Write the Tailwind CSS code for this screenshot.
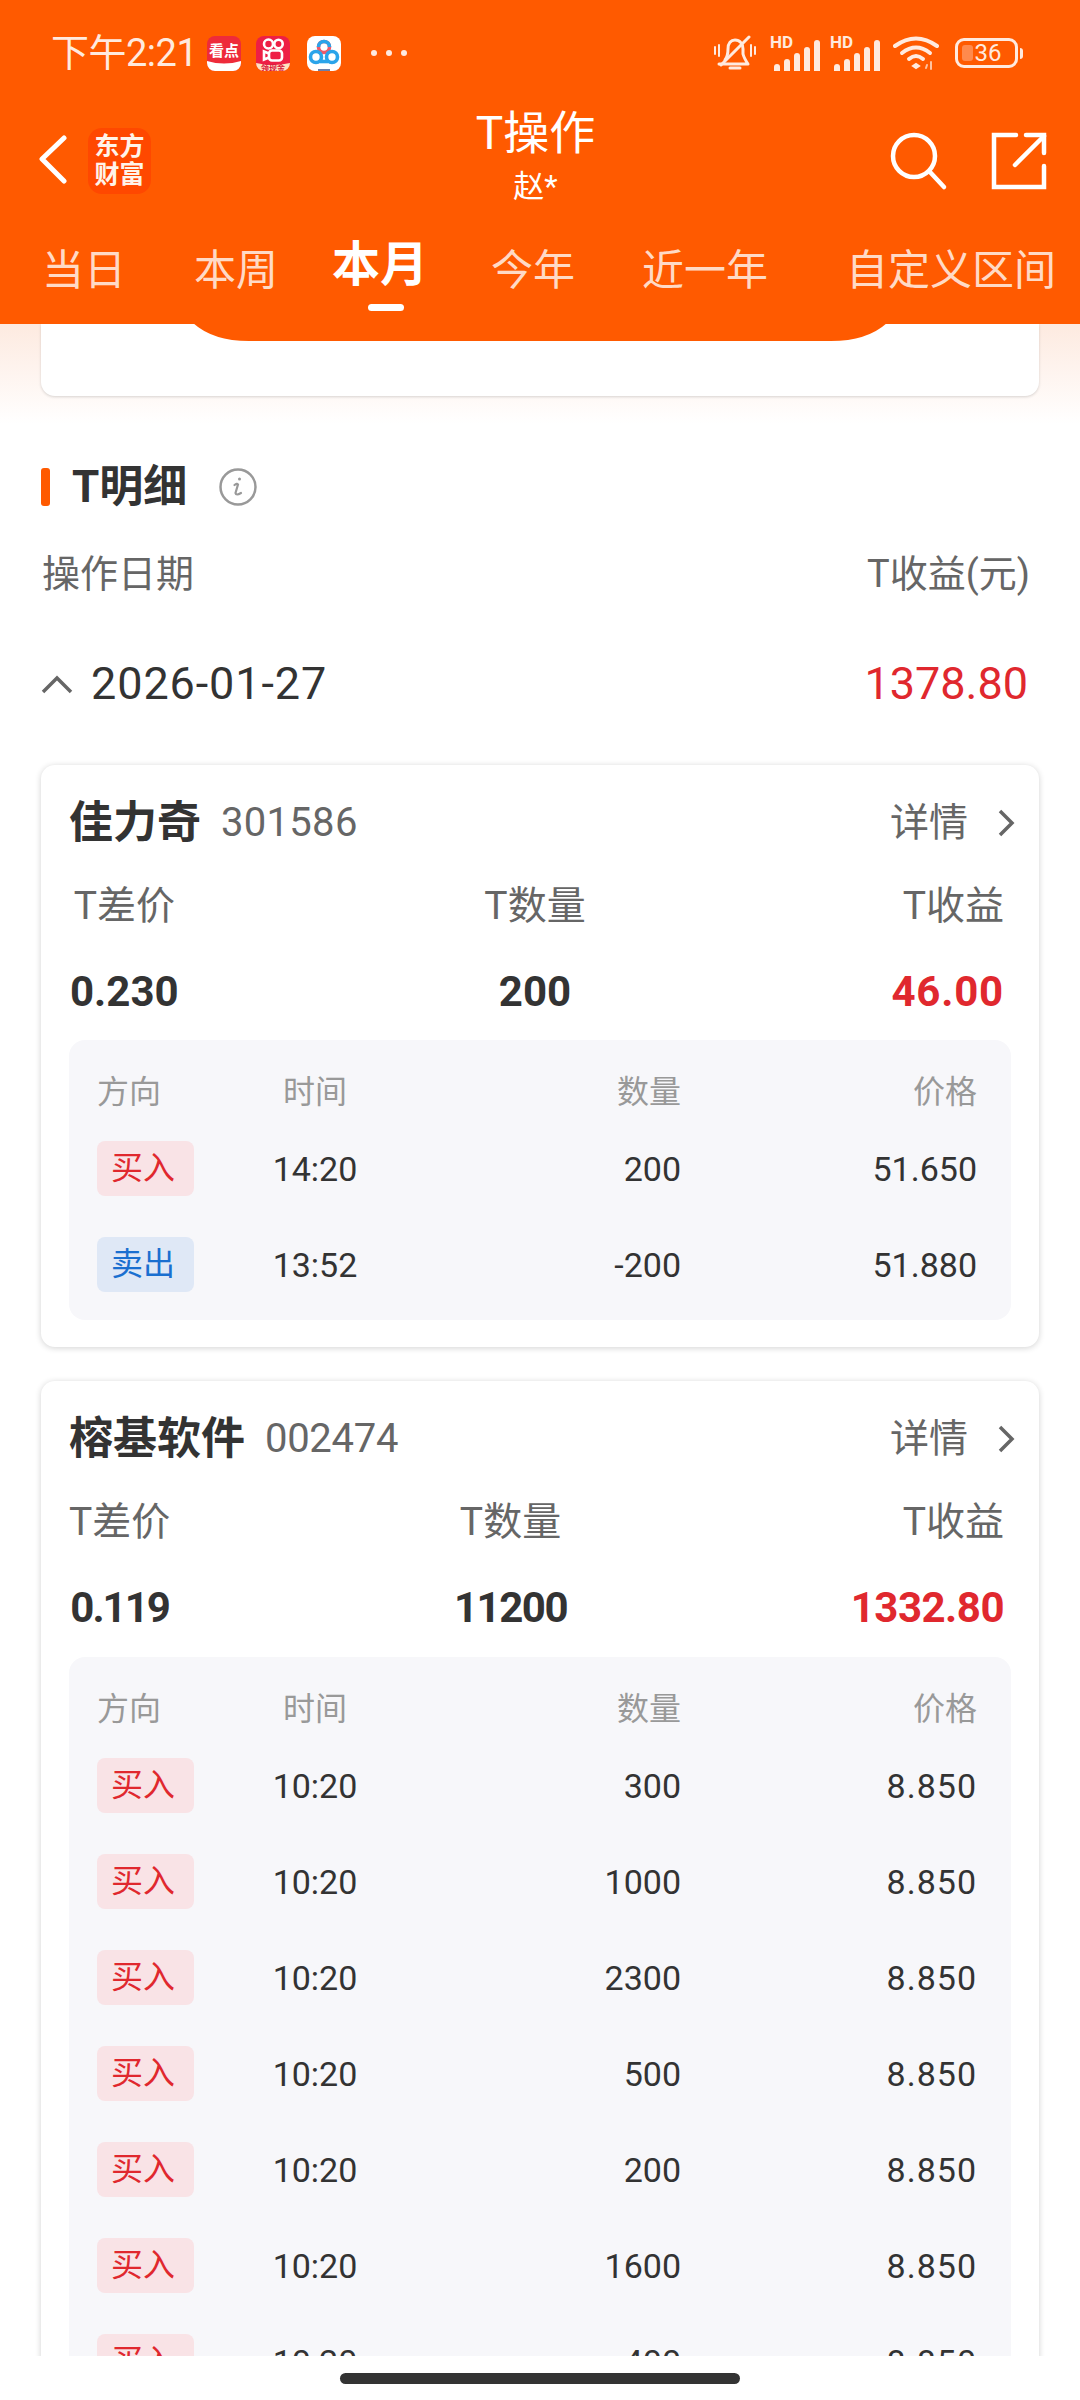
<!DOCTYPE html>
<html lang="zh-CN">
  <head>
    <meta charset="utf-8" />
    <title>T操作</title>
    <script src="https://cdn.jsdelivr.net/npm/@tailwindcss/browser@4"></script>
  </head>
  <body class="bg-white">
    <div class="w-[1080px] h-[2400px] flex flex-col overflow-hidden bg-white text-[#333333] font-['Roboto','Noto_Sans_CJK_SC',sans-serif]">
      <!-- orange header -->
      <header class="relative z-10 h-[324px] shrink-0 bg-[#ff5a00] text-white">
        <!-- status bar -->
        <div class="h-[106px] flex items-center text-[#ffeadf]">
          <span class="ml-[51px] text-[38px] leading-none tracking-[-0.5px]">下午2:21</span>
          <svg class="ml-[10px]" width="34" height="35" viewBox="0 0 34 35">
            <rect width="34" height="35" rx="8" fill="#ee2b3a" />
            <path d="M0 25 Q17 30 34 25 V27 a8 8 0 0 1 -8 8 H8 a8 8 0 0 1 -8 -8Z" fill="#fff" />
            <text x="17" y="20" text-anchor="middle" font-size="15" font-weight="700" fill="#fff">看点</text>
          </svg>
          <svg class="ml-[15px]" width="34" height="35" viewBox="0 0 34 35">
            <rect width="34" height="35" rx="8" fill="#ee1f45" />
            <path d="M0 27 Q17 31 34 27 V27 a8 8 0 0 1 -8 8 H8 a8 8 0 0 1 -8 -8Z" fill="#ffe2c0" />
            <text x="17" y="34.500" text-anchor="middle" font-size="8" font-weight="700" fill="#d8143c">领现金</text>
            <g fill="none" stroke="#fff" stroke-width="2.6">
              <circle cx="12.500" cy="8" r="4.500" />
              <circle cx="22.500" cy="8" r="4.200" />
              <rect x="13" y="14.500" width="13" height="10" rx="3" />
              <path d="M13 17.500 L8 15.500 V23.500 L13 21.500" />
            </g>
          </svg>
          <svg class="ml-[17px]" width="34" height="35" viewBox="0 0 34 35">
            <rect width="34" height="35" rx="8" fill="#fff" />
            <g fill="none" stroke-width="3.600">
              <circle cx="17" cy="11" r="5.500" stroke="#ee5a6a" />
              <path d="M11.500 11 A5.500 5.500 0 0 1 22.500 11" stroke="#2aa4ea" />
              <circle cx="9" cy="21" r="5.500" stroke="#2aa4ea" />
              <circle cx="25" cy="21" r="5.500" stroke="#2aa4ea" />
              <path d="M13 25.500 H21" stroke="#2aa4ea" />
            </g>
            <rect x="11" y="33" width="12" height="2" fill="#6d7fa8" />
          </svg>
          <div class="ml-[30px] flex gap-[9px]">
            <span class="w-[6px] h-[6px] rounded-full bg-[#ffeadf]"></span>
            <span class="w-[6px] h-[6px] rounded-full bg-[#ffeadf]"></span>
            <span class="w-[6px] h-[6px] rounded-full bg-[#ffeadf]"></span>
          </div>

          <!-- right side indicators -->
          <svg class="ml-auto" width="44" height="36" viewBox="0 0 44 36" fill="none" stroke="#ffeadf" stroke-width="3" stroke-linecap="round" stroke-linejoin="round">
            <path d="M12 25 Q15 21 15 14 C15 8 18 5 22 5 C27 5 30 9 30 14 V19 Q31 23 35 29 H6" />
            <path d="M8 30 L36 2" />
            <path d="M2 12 V19 M6 10 V21 M38 10 V21 M42 12 V19" stroke-width="2" />
            <path d="M17 33 H27" stroke-width="3" />
          </svg>
          <div class="ml-[13px] relative w-[50px] h-[35px]">
            <span class="absolute left-0 top-[-1px] text-[17px] leading-[14px] font-bold">HD</span>
            <div class="absolute right-0 bottom-0 flex items-end gap-[4px]">
              <span class="w-[6px] h-[7px] rounded-t-full bg-[#ffeadf]"></span>
              <span class="w-[6px] h-[12px] rounded-t-full bg-[#ffeadf]"></span>
              <span class="w-[6px] h-[18px] rounded-t-full bg-[#ffeadf]"></span>
              <span class="w-[6px] h-[24px] rounded-t-full bg-[#ffeadf]"></span>
              <span class="w-[6px] h-[31px] rounded-t-full bg-[#ffeadf]"></span>
            </div>
          </div>
          <div class="ml-[10px] relative w-[50px] h-[35px]">
            <span class="absolute left-0 top-[-1px] text-[17px] leading-[14px] font-bold">HD</span>
            <div class="absolute right-0 bottom-0 flex items-end gap-[4px]">
              <span class="w-[6px] h-[7px] rounded-t-full bg-[#ffeadf]"></span>
              <span class="w-[6px] h-[12px] rounded-t-full bg-[#ffeadf]"></span>
              <span class="w-[6px] h-[18px] rounded-t-full bg-[#ffeadf]"></span>
              <span class="w-[6px] h-[24px] rounded-t-full bg-[#ffeadf]"></span>
              <span class="w-[6px] h-[31px] rounded-t-full bg-[#ffeadf]"></span>
            </div>
          </div>
          <svg class="ml-[13px]" width="47" height="36" viewBox="0 0 47 36" fill="none" stroke="#ffeadf" stroke-width="4" stroke-linecap="round">
            <path d="M2 11 Q23 -4 44 11" />
            <path d="M9 18 Q23 7 37 18" />
            <path d="M16 24 Q23 18 30 24" />
            <path d="M20 31 L23 33 L26 31 L23 29Z" fill="#ffeadf" stroke-width="2" />
            <path d="M38 27 V34 M34 30 L33 33" stroke="#ffc2a0" stroke-width="2" />
          </svg>
          <div class="ml-[15px] relative w-[63px] h-[30px] rounded-[9px] border-[3px] border-[#ffeadf] flex items-center justify-center">
            <span class="absolute left-[4px] top-[4px] w-[11px] h-[16px] rounded-[3px] bg-[#ff8a4d]"></span>
            <span class="relative text-[24px] leading-none pl-[3px]">36</span>
          </div>
          <span class="ml-[2px] mr-[57px] w-[3px] h-[11px] rounded-r-full bg-[#ffeadf]"></span>
        </div>

        <!-- title bar -->
        <div class="relative h-[110px] flex items-center">
          <svg class="ml-[38px] mt-[-2px]" width="30" height="50" viewBox="0 0 30 50" fill="none" stroke="#fff" stroke-width="5" stroke-linecap="round" stroke-linejoin="round">
            <path d="M26 3 L4 24 L26 46" />
          </svg>
          <div class="ml-[20px] w-[63px] h-[66px] rounded-[14px] bg-[#ff4800] flex flex-col items-center justify-center font-bold text-[25px] leading-[28px] text-[#fff3ea]">
            <span>东方</span>
            <span>财富</span>
          </div>
          <div class="absolute left-0 right-[9px] top-0 flex flex-col items-center">
            <span class="text-[46px] leading-[54px]">T操作</span>
            <span class="text-[31px] leading-[38px] mt-[8px]">赵*</span>
          </div>
          <svg class="ml-auto mr-[-2px]" width="60" height="60" viewBox="0 0 60 60" fill="none" stroke="#fff" stroke-width="4.500" stroke-linecap="round">
            <circle cx="25" cy="25" r="21" />
            <path d="M41 41 L55 56" />
          </svg>
          <svg class="ml-[44px] mr-[33px]" width="56" height="58" viewBox="0 0 56 58" fill="none" stroke="#fff" stroke-width="4.500" stroke-linecap="round">
            <path d="M25 3 H3 V55 H53 V34" />
            <path d="M24 33 L53 4" />
            <path d="M35 3 H53 V21" />
          </svg>
        </div>

        <!-- period tabs -->
        <div class="relative h-[108px] flex items-start text-[42px] leading-[52px] text-[#ffdac6]">
          <span class="ml-[42px] mt-[29px]">当日</span>
          <span class="ml-[68px] mt-[29px]">本周</span>
          <span class="ml-[54px] mt-[21px] flex flex-col items-center text-[48px] leading-[56px] font-bold text-white">
            本月
            <i class="block mt-[11px] ml-[12px] w-[36px] h-[7px] rounded-full bg-white"></i>
          </span>
          <span class="ml-[63px] mt-[29px]">今年</span>
          <span class="ml-[67px] mt-[29px]">近一年</span>
          <span class="ml-[78px] mt-[29px]">自定义区间</span>
        </div>

        <!-- curved tab underside -->
        <svg class="absolute left-[193px] top-[323px]" width="694" height="19" viewBox="0 0 694 19">
          <path d="M0 0 Q20 18 56 18 H638 Q674 18 694 0Z" fill="#ff5a00" />
        </svg>
      </header>

      <main class="flex-1 min-h-0 overflow-hidden">
        <!-- tail of the summary card -->
        <div class="h-[100px] px-[41px] bg-linear-to-b from-[#fdeae0] to-white">
          <div class="h-[72px] bg-white rounded-b-[14px] shadow-[0_1px_3px_rgba(0,0,0,0.16)]"></div>
        </div>

        <section class="px-[41px]">
          <div class="mt-[44px] h-[38px] flex items-center">
            <span class="w-[9px] h-[38px] rounded-[3px] bg-[#ff5a00]"></span>
            <h2 class="ml-[22px] text-[44px] font-bold leading-none">T明细</h2>
            <svg class="ml-[32px]" width="38" height="38" viewBox="0 0 38 38" fill="none" stroke="#999999">
              <circle cx="19" cy="19" r="17.500" stroke-width="2.500" />
              <circle cx="20.500" cy="11" r="1.500" fill="#999999" stroke="none" />
              <path d="M15.500 17 Q18 15 19 16.500 L16.500 25 Q17 28 22 25" stroke-width="2.200" stroke-linecap="round" />
            </svg>
          </div>

          <div class="mt-[42px] h-[52px] flex items-center justify-between text-[38px] text-[#666666] pr-[9px] pl-[1px]">
            <span>操作日期</span>
            <span>T收益(元)</span>
          </div>

          <div class="mt-[58px] h-[52px] flex items-center pr-[11px]">
            <svg width="32" height="20" viewBox="0 0 32 20" fill="none" stroke="#666666" stroke-width="3.500">
              <path d="M2 18 L16 4 L30 18" />
            </svg>
            <span class="ml-[18px] text-[45px] tracking-[0.9px]">2026-01-27</span>
            <span class="ml-auto text-[45px] text-[#e0282e]">1378.80</span>
          </div>

          <!-- 佳力奇 -->
          <article class="mt-[55px] px-[28px] pb-[27px] bg-white rounded-[14px] shadow-[0_1px_6px_rgba(0,0,0,0.18)]">
            <div class="h-[114px] pt-[2px] flex items-center">
              <span class="text-[44px] font-bold">佳力奇</span>
              <span class="ml-[20px] text-[40px] text-[#666666] tracking-[0.3px]">301586</span>
              <span class="ml-auto text-[39px] text-[#666666]">详情</span>
              <svg class="ml-[29px] mr-[-6px]" width="20" height="30" viewBox="0 0 20 30" fill="none" stroke="#666666" stroke-width="3.500">
                <path d="M3 3 L15 15 L3 27" />
              </svg>
            </div>
            <div class="flex justify-between pl-[1px] pr-[7px] mb-[23px]">
              <div class="flex flex-col items-center">
                <span class="h-[52px] pt-[2px] text-[39px] leading-[50px] text-[#666666]">T差价</span>
                <span class="mt-[34px] h-[52px] pt-[2px] text-[42px] leading-[50px] font-bold">0.230</span>
              </div>
              <div class="flex flex-col items-center">
                <span class="h-[52px] pt-[2px] text-[39px] leading-[50px] text-[#666666]">T数量</span>
                <span class="mt-[34px] h-[52px] pt-[2px] text-[42px] leading-[50px] font-bold">200</span>
              </div>
              <div class="flex flex-col items-end">
                <span class="h-[52px] pt-[2px] text-[39px] leading-[50px] text-[#666666]">T收益</span>
                <span class="mt-[34px] h-[52px] pt-[2px] text-[42px] leading-[50px] font-bold text-[#e0282e] tracking-[0.8px]">46.00</span>
              </div>
            </div>
            <div class="pl-[28px] pb-[8px] bg-[#f7f7fa] rounded-[16px] text-[34px]">
              <div class="h-[80px] pt-[24px] grid grid-cols-[158px_120px_306px_296px] items-center text-[32px] text-[#999999]">
                <span>方向</span><span class="text-center">时间</span><span class="text-right">数量</span><span class="text-right">价格</span>
              </div>
              <div class="h-[96px] pt-[2px] grid grid-cols-[158px_120px_306px_296px] items-center">
                <span class="mt-[-2px] w-[97px] h-[55px] rounded-[8px] bg-[#f9e3e6] text-[#e0282e] text-[32px] leading-[54px] pl-[14px]">买入</span><span class="text-center">14:20</span><span class="text-right">200</span><span class="text-right">51.650</span>
              </div>
              <div class="h-[96px] pt-[2px] grid grid-cols-[158px_120px_306px_296px] items-center">
                <span class="mt-[-2px] w-[97px] h-[55px] rounded-[8px] bg-[#dfe8f6] text-[#1a6fd0] text-[32px] leading-[54px] pl-[14px]">卖出</span><span class="text-center">13:52</span><span class="text-right">-200</span><span class="text-right">51.880</span>
              </div>
            </div>
          </article>

          <!-- 榕基软件, runs on below the fold -->
          <article class="mt-[34px] px-[28px] pb-[27px] bg-white rounded-[14px] shadow-[0_1px_6px_rgba(0,0,0,0.18)]">
            <div class="h-[114px] pt-[2px] flex items-center">
              <span class="text-[44px] font-bold">榕基软件</span>
              <span class="ml-[20px] text-[40px] text-[#666666] tracking-[-0.3px]">002474</span>
              <span class="ml-auto text-[39px] text-[#666666]">详情</span>
              <svg class="ml-[29px] mr-[-6px]" width="20" height="30" viewBox="0 0 20 30" fill="none" stroke="#666666" stroke-width="3.500">
                <path d="M3 3 L15 15 L3 27" />
              </svg>
            </div>
            <div class="flex justify-between pr-[7px] mb-[24px]">
              <div class="flex flex-col items-center">
                <span class="h-[52px] pt-[2px] text-[39px] leading-[50px] text-[#666666]">T差价</span>
                <span class="mt-[34px] h-[52px] pt-[2px] text-[42px] leading-[50px] font-bold tracking-[-2px]">0.119</span>
              </div>
              <div class="flex flex-col items-center">
                <span class="h-[52px] pt-[2px] text-[39px] leading-[50px] text-[#666666]">T数量</span>
                <span class="mt-[34px] h-[52px] pt-[2px] text-[42px] leading-[50px] font-bold tracking-[-1.500px]">11200</span>
              </div>
              <div class="flex flex-col items-end">
                <span class="h-[52px] pt-[2px] text-[39px] leading-[50px] text-[#666666]">T收益</span>
                <span class="mt-[34px] h-[52px] pt-[2px] text-[42px] leading-[50px] font-bold text-[#e0282e] tracking-[-0.500px]">1332.80</span>
              </div>
            </div>
            <div class="pl-[28px] pb-[8px] bg-[#f7f7fa] rounded-[16px] text-[34px]">
              <div class="h-[80px] pt-[24px] grid grid-cols-[158px_120px_306px_296px] items-center text-[32px] text-[#999999]">
                <span>方向</span><span class="text-center">时间</span><span class="text-right">数量</span><span class="text-right">价格</span>
              </div>
              <div class="h-[96px] pt-[2px] grid grid-cols-[158px_120px_306px_296px] items-center">
                <span class="mt-[-2px] w-[97px] h-[55px] rounded-[8px] bg-[#f9e3e6] text-[#e0282e] text-[32px] leading-[54px] pl-[14px]">买入</span><span class="text-center">10:20</span><span class="text-right">300</span><span class="text-right tracking-[1px]">8.850</span>
              </div>
              <div class="h-[96px] pt-[2px] grid grid-cols-[158px_120px_306px_296px] items-center">
                <span class="mt-[-2px] w-[97px] h-[55px] rounded-[8px] bg-[#f9e3e6] text-[#e0282e] text-[32px] leading-[54px] pl-[14px]">买入</span><span class="text-center">10:20</span><span class="text-right">1000</span><span class="text-right tracking-[1px]">8.850</span>
              </div>
              <div class="h-[96px] pt-[2px] grid grid-cols-[158px_120px_306px_296px] items-center">
                <span class="mt-[-2px] w-[97px] h-[55px] rounded-[8px] bg-[#f9e3e6] text-[#e0282e] text-[32px] leading-[54px] pl-[14px]">买入</span><span class="text-center">10:20</span><span class="text-right">2300</span><span class="text-right tracking-[1px]">8.850</span>
              </div>
              <div class="h-[96px] pt-[2px] grid grid-cols-[158px_120px_306px_296px] items-center">
                <span class="mt-[-2px] w-[97px] h-[55px] rounded-[8px] bg-[#f9e3e6] text-[#e0282e] text-[32px] leading-[54px] pl-[14px]">买入</span><span class="text-center">10:20</span><span class="text-right">500</span><span class="text-right tracking-[1px]">8.850</span>
              </div>
              <div class="h-[96px] pt-[2px] grid grid-cols-[158px_120px_306px_296px] items-center">
                <span class="mt-[-2px] w-[97px] h-[55px] rounded-[8px] bg-[#f9e3e6] text-[#e0282e] text-[32px] leading-[54px] pl-[14px]">买入</span><span class="text-center">10:20</span><span class="text-right">200</span><span class="text-right tracking-[1px]">8.850</span>
              </div>
              <div class="h-[96px] pt-[2px] grid grid-cols-[158px_120px_306px_296px] items-center">
                <span class="mt-[-2px] w-[97px] h-[55px] rounded-[8px] bg-[#f9e3e6] text-[#e0282e] text-[32px] leading-[54px] pl-[14px]">买入</span><span class="text-center">10:20</span><span class="text-right">1600</span><span class="text-right tracking-[1px]">8.850</span>
              </div>
              <div class="h-[96px] pt-[2px] grid grid-cols-[158px_120px_306px_296px] items-center">
                <span class="mt-[-2px] w-[97px] h-[55px] rounded-[8px] bg-[#f9e3e6] text-[#e0282e] text-[32px] leading-[54px] pl-[14px]">买入</span><span class="text-center">10:20</span><span class="text-right">400</span><span class="text-right tracking-[1px]">8.850</span>
              </div>
            </div>
          </article>
        </section>
      </main>

      <!-- gesture bar -->
      <footer class="h-[44px] shrink-0 flex justify-center pt-[17px] bg-white">
        <span class="w-[400px] h-[11px] rounded-full bg-[#333333]"></span>
      </footer>
    </div>
  </body>
</html>
